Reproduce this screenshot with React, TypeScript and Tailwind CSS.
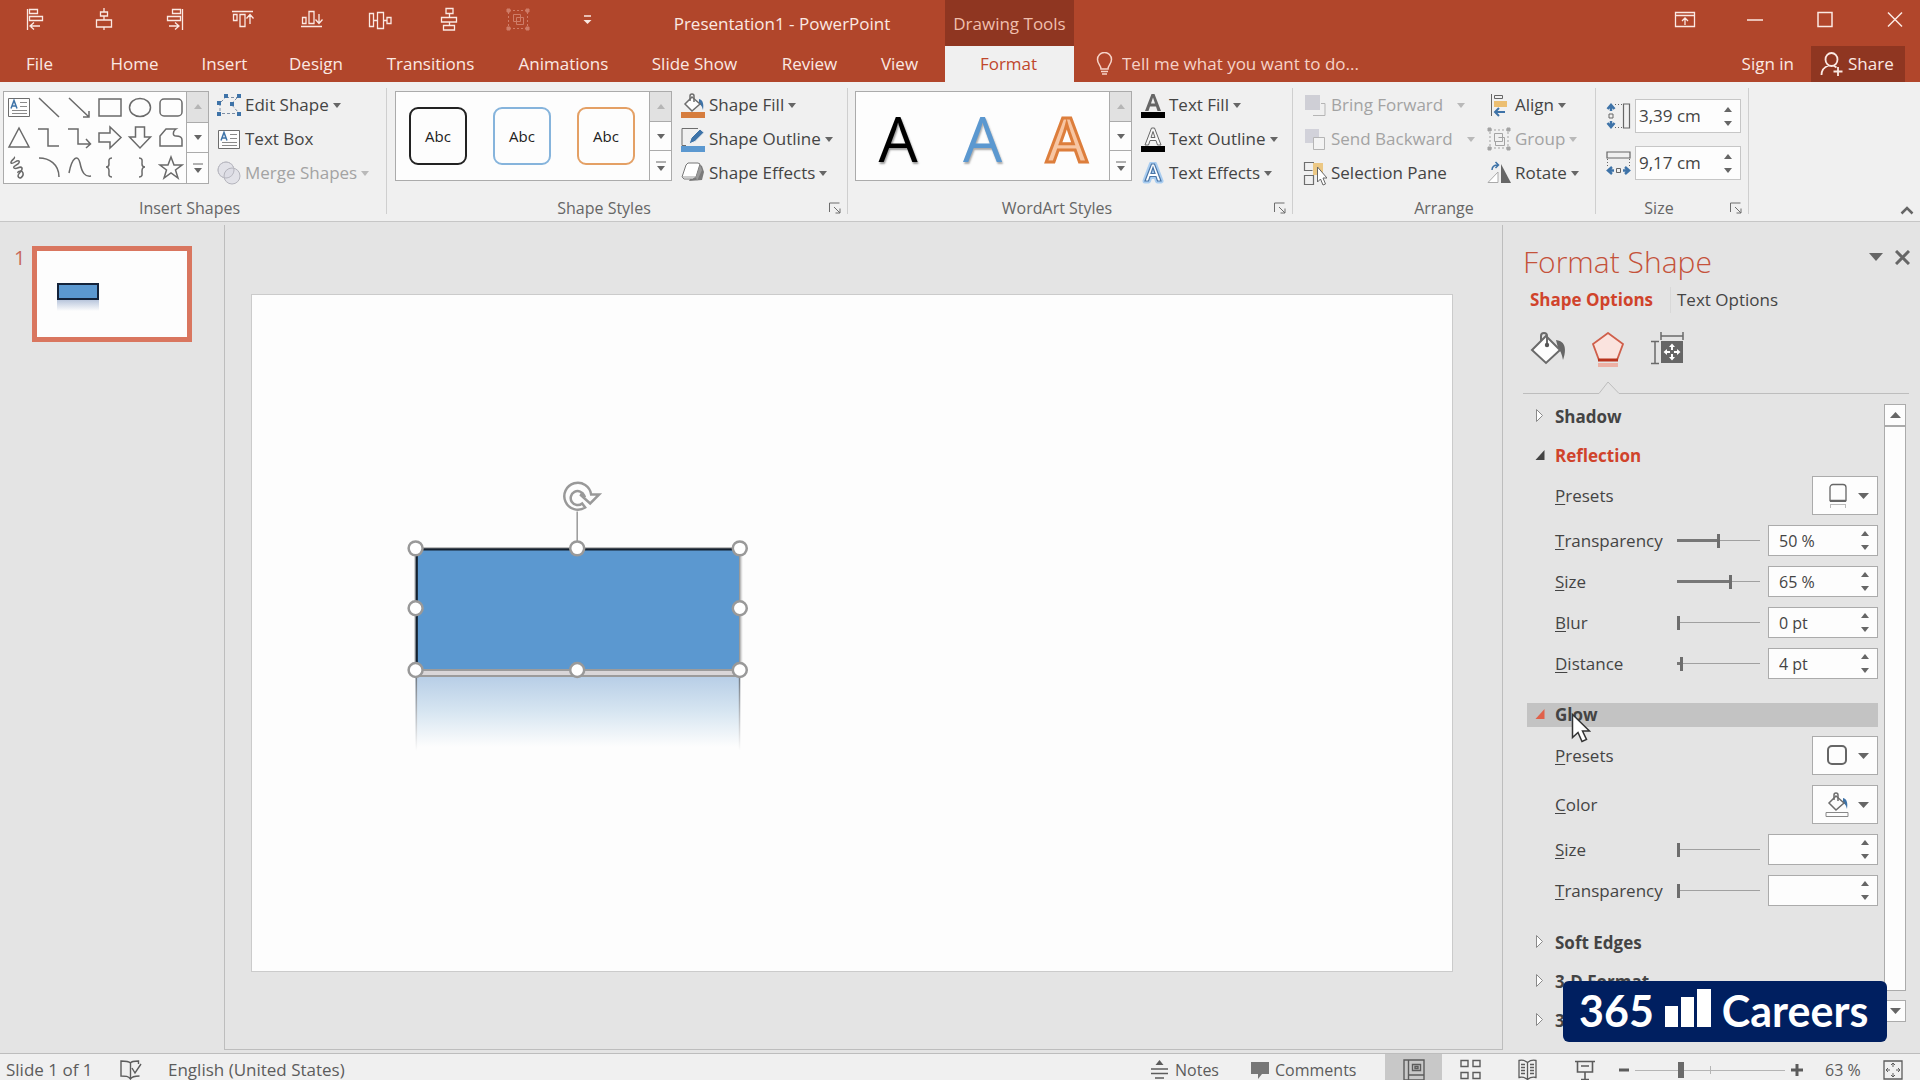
import React, { useState } from 'react';

type SvgProps = { w?: number; h?: number; className?: string; children: React.ReactNode };

const Svg: React.FC<SvgProps> = ({ w = 24, h = 24, className = '', children }) => (
  <svg width={w} height={h} viewBox={`0 0 ${w} ${h}`} fill="none" stroke="currentColor" className={`shrink-0 ${className}`} aria-hidden="true">
    {children}
  </svg>
);

const Caret: React.FC<{ className?: string; up?: boolean }> = ({ className = '', up }) => (
  <Svg w={8} h={5} className={className}>
    <path d={up ? 'M0 5L4 0L8 5Z' : 'M0 0H8L4 5Z'} fill="currentColor" stroke="none" />
  </Svg>
);

/* ---------- title bar ---------- */

const quickAccess = [
  { name: 'Align Left', icon: <path d="M4.5 2v21M6.5 2.5h8v4h-8zM6.5 9.5h13v4h-13zM8 19h9M11 15.5l-4 3.5l4 3.5" strokeWidth="1.3" /> },
  { name: 'Align Center', icon: <path d="M12 1v4M12 9v4M12 20v3M8.5 5h7v4h-7zM4.5 13h15v7h-15z" strokeWidth="1.3" /> },
  { name: 'Align Right', icon: <path d="M21.5 2v21M11.5 2.5h8v4h-8zM6.5 9.5h13v4h-13zM8 19h9M14 15.5l4 3.5l-4 3.5" strokeWidth="1.3" /> },
  { name: 'Align Top', icon: <path d="M2 4.5h21M3.5 7.5h3.5v6h-3.5zM10 7.5h5v12h-5zM20 17v-9M16.5 11.5l3.5-4l3.5 4" strokeWidth="1.3" /> },
  { name: 'Align Bottom', icon: <path d="M2 19.5h21M3.5 10.5h3.5v6h-3.5zM10 4.5h5v12h-5zM20 7v9M16.5 12.5l3.5 4l3.5-4" strokeWidth="1.3" /> },
  { name: 'Distribute Horizontally', icon: <path d="M1.5 6.5h4v13h-4zM9.5 5.5h6v16h-6zM19 10.5h4v6h-4zM5.5 13.5h4M15.5 13.5h3.5" strokeWidth="1.3" /> },
  { name: 'Distribute Vertically', icon: <path d="M9 1.5h7v5h-7zM4.5 10.5h15v4.5h-15zM6.5 18.5h11v4.5h-11zM12.5 6.5v4M12.5 15v3.5" strokeWidth="1.3" /> },
  {
    name: 'Group Objects',
    dim: true,
    icon: (
      <>
        <path d="M3 3.5h18M3 21.5h18M2.5 5v15M21.5 5v15" strokeDasharray="2 2" />
        <path d="M7.5 7.5h7v7h-7zM10.5 10.5h7v7h-7z" />
        <path d="M1 2h3v3h-3zM20 2h3v3h-3zM1 20h3v3h-3zM20 20h3v3h-3z" fill="currentColor" />
      </>
    ),
  },
  {
    name: 'Customize Quick Access Toolbar',
    icon: (
      <>
        <path d="M9 9h7" strokeWidth="1.5" />
        <path d="M8.5 13h8l-4 4z" fill="currentColor" stroke="none" />
      </>
    ),
  },
];

const windowButtons = [
  { name: 'Ribbon Display Options', icon: <path d="M2.5 5.5h19v14h-19zM2.5 8.5h19M12 18v-7M9 14l3-3l3 3" strokeWidth="1.3" /> },
  { name: 'Minimize', icon: <path d="M4 13h16" strokeWidth="1.5" /> },
  { name: 'Maximize', icon: <path d="M5 5.5h14v14h-14z" strokeWidth="1.5" /> },
  { name: 'Close', icon: <path d="M5 5.5l14 14M19 5.5l-14 14" strokeWidth="1.5" /> },
];

const tabs = [
  { name: 'File', width: 'w-[79px] mr-[9px]' },
  { name: 'Home', width: 'w-[93px]' },
  { name: 'Insert', width: 'w-[87px]' },
  { name: 'Design', width: 'w-[96px]' },
  { name: 'Transitions', width: 'w-[133px]' },
  { name: 'Animations', width: 'w-[133px]' },
  { name: 'Slide Show', width: 'w-[129px]' },
  { name: 'Review', width: 'w-[101px]' },
  { name: 'View', width: 'w-[79px] mr-[6px]' },
];

const TitleBar: React.FC = () => (
  <header className="bg-[#b1462b] text-[17px] text-[#fbe9e3]">
    <div className="flex h-[46px]">
      <div className="flex shrink-0">
        {quickAccess.map(q => (
          <button key={q.name} aria-label={q.name} className={`flex h-[38px] w-[69px] items-center justify-center ${q.dim ? 'text-[#cf7d68]' : ''}`}>
            <Svg>{q.icon}</Svg>
          </button>
        ))}
      </div>
      <h1 className="w-[324px] shrink-0 pr-[2px] text-center leading-[48px]">Presentation1 - PowerPoint</h1>
      <div className="w-[129px] shrink-0 bg-[#8f3621] text-center leading-[48px] text-[#f0bfae]">Drawing Tools</div>
      <div className="ml-auto flex gap-5">
        {windowButtons.map(b => (
          <button key={b.name} aria-label={b.name} className="flex h-[38px] w-[50px] items-center justify-center">
            <Svg>{b.icon}</Svg>
          </button>
        ))}
      </div>
    </div>
    <nav className="flex h-9 items-stretch">
      {tabs.map(t => (
        <button key={t.name} className={`shrink-0 ${t.width}`}>{t.name}</button>
      ))}
      <button className="w-[129px] shrink-0 bg-[#f0f0f0] pr-[2px] text-[#c0472c]">Format</button>
      <label className="flex items-center gap-[9px] pl-[22px] text-[#f6d3c8]">
        <Svg w={17} h={24}>
          <path d="M5 17c0-4-3.500-5-3.500-9.500a7 7 0 0 1 14 0c0 4.500-3.500 5.500-3.500 9.500zM5 19.500h7M6 22h5" strokeWidth="1.500" />
        </Svg>
        <input type="text" placeholder="Tell me what you want to do..." className="w-[260px] bg-transparent outline-none placeholder:text-[#f6d3c8]" />
      </label>
      <button className="ml-auto mr-[17px] shrink-0">Sign in</button>
      <button className="mr-[15px] flex w-[94px] shrink-0 items-center gap-1 bg-[#8f3621] pl-[9px]">
        <Svg w={24} h={26}>
          <path d="M11.500 2a6 6.500 0 0 1 0 13a6 6.500 0 0 1 0-13M1.500 24c0-5 3-8 7-9.500M13.500 14.500l3 2M18 16v9M13.500 20.500h9" strokeWidth="1.800" />
        </Svg>
        Share
      </button>
    </nav>
  </header>
);

/* ---------- ribbon ---------- */

const TextBoxIcon = () => (
  <Svg w={24} h={22}>
    <path d="M1.500 2.500h21v18h-21z" fill="#fdfdfd" stroke="#6d6d6d" />
    <path d="M4 12.500l3-8l3 8M5 10h4" stroke="#3e73a8" strokeWidth="1.500" />
    <path d="M13 6.500h7M13 10.500h7M5 14.500h15M5 17.500h15" stroke="#8a8a8a" />
  </Svg>
);

const shapes = [
  { name: 'Line', d: 'M3 3L23 22' },
  { name: 'Arrow', d: 'M2 3L22 22M22 16v6h-6' },
  { name: 'Rectangle', d: 'M2 4h22v17h-22z' },
  { name: 'Oval', d: 'M13 3.500c6 0 10.500 4 10.500 9s-4.500 9-10.500 9s-10.500-4-10.500-9s4.500-9 10.500-9z' },
  { name: 'Rounded Rectangle', d: 'M6 4h14a4 4 0 0 1 4 4v9a4 4 0 0 1-4 4h-14a4 4 0 0 1-4-4v-9a4 4 0 0 1 4-4z' },
  { name: 'Triangle', d: 'M13 3L23 22H3z' },
  { name: 'Elbow Connector', d: 'M2 4h10v17h11' },
  { name: 'Elbow Arrow', d: 'M1 4h10v15h12M19 14l4.500 5l-4.500 4' },
  { name: 'Right Arrow', d: 'M2 8h11v-6l11 10.500l-11 10.500v-6h-11z' },
  { name: 'Down Arrow', d: 'M8.500 2h9v10h6l-10.500 11l-10.500-11h6z' },
  { name: 'Freeform', d: 'M8 4h10c-3 2-4 7 0 7c4 0 6 1 6 4v6h-22v-10z' },
  { name: 'Scribble', d: 'M8 2c2 1-4 4-3 6c2 2 6-4 8-2c2 3-7 5-5 7c3 2 6-3 8 0c1 3-4 5-4 8c1 4 6 1 5-3c-1-3-6-2-5 0' },
  { name: 'Arc', d: 'M3 3c10 0 20 6 20 19' },
  { name: 'Curve', d: 'M2 18c3-16 9-19 11-10c2 10 5 14 11 13' },
  { name: 'Left Brace', d: 'M15 3c-4 0-3 3-3 6c0 2-1 3-3 3c2 0 3 2 3 4c0 3-1 6 3 6' },
  { name: 'Right Brace', d: 'M12 3c4 0 3 3 3 6c0 2 1 3 3 3c-2 0-3 2-3 4c0 3 1 6-3 6' },
  { name: 'Star', d: 'M13 2l3 8h8l-6.500 5l2.500 8l-7-5l-7 5l2.500-8l-6.500-5h8z' },
];

const GalleryScroll: React.FC = () => (
  <div className="flex w-[22px] shrink-0 flex-col divide-y divide-[#ababab] border-l border-[#ababab] text-[#666]">
    <button aria-label="Previous row" className="flex flex-1 items-center justify-center bg-[#e1e1e1] text-[#b5b5b5]">
      <Caret up />
    </button>
    <button aria-label="Next row" className="flex flex-1 items-center justify-center">
      <Caret />
    </button>
    <button aria-label="More" className="flex flex-1 items-center justify-center">
      <Svg w={12} h={12}>
        <path d="M1 2h10" />
        <path d="M2 6h8l-4 5z" fill="currentColor" stroke="none" />
      </Svg>
    </button>
  </div>
);

type GroupProps = { title: string; width: string; launcher?: boolean; children: React.ReactNode };

const Group: React.FC<GroupProps> = ({ title, width, launcher, children }) => (
  <>
    <section className={`flex h-[130px] shrink-0 flex-col ${width}`}>
      <div className="flex flex-1">{children}</div>
      <div className="flex h-5 items-center">
        <h2 className="flex-1 text-center text-[16px] leading-5 text-[#666]">{title}</h2>
        {launcher && (
          <button aria-label={`${title} options`} className="w-[26px] pl-2 text-[#6d6d6d]">
            <Svg w={12} h={12}>
              <path d="M.5 10v-9h10M5 5l6 6M11 6.500v4.500h-4.500" />
            </Svg>
          </button>
        )}
      </div>
    </section>
    <div className="h-[126px] w-px shrink-0 bg-[#cfcfcf]" />
  </>
);

type CommandProps = { label: string; icon: React.ReactNode; menu?: boolean; disabled?: boolean; wide?: boolean };

const Command: React.FC<CommandProps> = ({ label, icon, menu, disabled, wide }) => (
  <button disabled={disabled} className={`flex h-[34px] items-center whitespace-nowrap ${disabled ? 'text-[#a3a3a3]' : 'text-[#444]'}`}>
    <span className="mr-1 flex w-6 shrink-0 justify-center">{icon}</span>
    {label}
    {menu && <Caret className={`${wide ? 'ml-[14px]' : 'ml-1'} ${disabled ? 'text-[#b9b9b9]' : 'text-[#666]'}`} />}
  </button>
);

const EditShapeIcon = (
  <Svg>
    <path d="M9 4.500h11M4 9L9 4M20 5l-6 6l7 8M3 10v9M5 20.500h15" stroke="#7d8fa5" strokeDasharray="3 2" />
    <path d="M7 1h4v4h-4zM20 1h4v4h-4zM0 8h4v4h-4zM13 9h4v4h-4zM0 19h4v4h-4zM20 19h4v4h-4z" fill="#3e73a8" stroke="none" />
  </Svg>
);

const MergeIcon = (
  <Svg>
    <circle cx="9" cy="9" r="8" fill="#e2e2e8" stroke="#bcbcc4" />
    <circle cx="15" cy="15" r="8" fill="#dcdce4" fillOpacity=".7" stroke="#b4b4bc" />
    <circle cx="9" cy="9" r="8" stroke="#bcbcc4" />
  </Svg>
);

const FillIcon: React.FC<{ bar: string; outlined?: boolean }> = ({ bar, outlined }) => (
  <Svg w={24} h={25}>
    <path d="M18 6c4 1 5 5 4 11c-1-4-2-5-4-6z" fill="#3e73a8" stroke="none" />
    <path d="M11 4l8 7l-8 7l-7-7z" fill="#fdfdfd" stroke="#6d6d6d" strokeWidth="1.500" />
    <path d="M9 8v-5a2 2 0 0 1 4 0v6" stroke="#6d6d6d" strokeWidth="1.500" />
    <path d={outlined ? 'M1 20.500h22v4h-22z' : 'M0 19h24v6h-24z'} fill={bar} stroke={outlined ? '#888' : 'none'} />
  </Svg>
);

const OutlineIcon = (
  <Svg w={24} h={25}>
    <path d="M17 1.500h-16v17h4" stroke="#6d6d6d" />
    <path d="M8 17l2-6l9-9l4 3.500l-9 9z" fill="#3e73a8" stroke="#f0f0f0" />
    <path d="M0 19h24v6h-24z" fill="#5b98d0" stroke="none" />
  </Svg>
);

const EffectsIcon = (
  <Svg>
    <path d="M8 20l13-1l2-8l-2-6l-3-2z" fill="#7a7a7a" stroke="none" />
    <path d="M7 2h10l2 1l-4 13l-3 2h-9l-2-2l4-12z" fill="#fff" stroke="#777" />
    <path d="M15 16l4-12l2 5l-5 11z" fill="#999" stroke="none" />
    <path d="M1 16h14" stroke="#999" />
  </Svg>
);

const letterA = 'M4 18L10.500 1h3L20 18h-3.500l-1.500-4.500h-6l-1.500 4.500zM10 10.500h4L12 4.500z';

const TextFillIcon = (
  <Svg w={24} h={25}>
    <path d={letterA} fill="#666" stroke="none" fillRule="evenodd" />
    <path d="M0 19h24v6h-24z" fill="#000" stroke="none" />
  </Svg>
);

const TextOutlineIcon = (
  <Svg w={24} h={25}>
    <path d={letterA} fill="#f7f7f7" stroke="#666" fillRule="evenodd" />
    <path d="M0 19h24v6h-24z" fill="#000" stroke="none" />
  </Svg>
);

const TextEffectsIcon = (
  <Svg w={24} h={22}>
    <path d={letterA} stroke="#a9cdf0" strokeWidth="5" strokeLinejoin="round" fillRule="evenodd" transform="translate(0 1)" />
    <path d={letterA} fill="#fff" stroke="#4a76a8" strokeWidth="1.200" fillRule="evenodd" transform="translate(0 1)" />
  </Svg>
);

const BringIcon = (
  <Svg>
    <path d="M10 22.500h12v-12h-4" stroke="#b5b5b5" />
    <path d="M2 2h15v15h-15z" fill="#cfcfd6" stroke="none" />
  </Svg>
);

const SendIcon = (
  <Svg>
    <path d="M2 2h14v14h-14z" fill="#d2d2da" stroke="none" />
    <path d="M10.500 10.500h11v12h-11z" fill="#f3f3f3" stroke="#b5b5b5" />
  </Svg>
);

const SelectionIcon = (
  <Svg w={24} h={26}>
    <path d="M10 3h10v12h-10z" fill="#ecc884" stroke="none" />
    <path d="M11 2.500h-9.500v8h8M1.500 15.500h9v9h-9z" stroke="#6d6d6d" strokeWidth="1.200" />
    <path d="M14.500 7v15l3-3l2.500 6l2.500-1l-2.500-6h4z" fill="#fff" stroke="#666" />
  </Svg>
);

const AlignIcon = (
  <Svg>
    <path d="M4.500 1v22" stroke="#666" />
    <path d="M7.500 2.500h8v3h-8z" stroke="#666" />
    <path d="M7 8h13v6h-13z" fill="#ecbf72" stroke="none" />
    <path d="M8 19h10M12 15l-4 4l4 4" stroke="#3e73a8" strokeWidth="2" />
  </Svg>
);

const GroupIcon = (
  <Svg>
    <path d="M3 3h18v18h-18z" strokeDasharray="2 2" />
    <path d="M7.500 6.500h8v8h-8zM11.500 10.500h6v8h-9v-4" />
    <path d="M1 1h3v3h-3zM20 1h3v3h-3zM1 20h3v3h-3zM20 20h3v3h-3z" fill="currentColor" />
  </Svg>
);

const RotateIcon = (
  <Svg>
    <path d="M14 3v19h10z" fill="#666" stroke="none" />
    <path d="M11 11v10.500h-10z" fill="#fff" stroke="#aaa" />
    <path d="M5 9c0-4 2-5 6-5M8.500 1l3 3l-3 3" stroke="#3e73a8" strokeWidth="1.500" />
  </Svg>
);

const HeightIcon = (
  <Svg w={25} h={26}>
    <path d="M17.500 1h6v24h-6z" stroke="#666" strokeWidth="1.200" />
    <path d="M9 1.500h8M9 24.500h8" stroke="#666" strokeDasharray="1 2" />
    <path d="M3 11h4v4h-4z" stroke="#666" />
    <path d="M5 8v-6M1.500 6l3.500-4l3.500 4M5 18v6M1.500 20l3.500 4l3.500-4" stroke="#3e73a8" strokeWidth="2.500" />
  </Svg>
);

const WidthIcon = (
  <Svg w={25} h={26}>
    <path d="M1 2h23v6h-23z" stroke="#666" strokeWidth="1.200" />
    <path d="M1.500 9v7M23.500 9v7" stroke="#666" strokeDasharray="1 2" />
    <path d="M10.500 18.500h4v4h-4z" stroke="#666" />
    <path d="M8 20.500h-6M6 17l-4 3.500l4 3.500M17 20.500h6M19 17l4 3.500l-4 3.500" stroke="#3e73a8" strokeWidth="2.500" />
  </Svg>
);

type SpinBoxProps = { label: string; id: string; value: string; className: string };

const SpinBox: React.FC<SpinBoxProps> = ({ label, id, value, className }) => {
  const [text, setText] = useState(value);
  return (
    <div className={`flex shrink-0 border bg-[#fdfdfd] text-[#444] ${className}`}>
      <input id={id} aria-label={label} value={text} onChange={e => setText(e.target.value)} className="min-w-0 flex-1 bg-transparent outline-none" />
      <div className="flex w-6 flex-col items-center justify-center gap-[9px] text-[#666]">
        <button aria-label={`Increase ${label}`}><Caret up className="block" /></button>
        <button aria-label={`Decrease ${label}`}><Caret className="block" /></button>
      </div>
    </div>
  );
};

const Ribbon: React.FC = () => (
  <div className="flex h-[140px] border-b border-[#c6c6c6] bg-[#f0f0f0] pt-[6px] text-[17px]">
    <Group title="Insert Shapes" width="w-[386px] pr-[7px]">
      <div className="ml-[3px] mt-[3px] flex h-[93px] w-[206px] shrink-0 border border-[#ababab] bg-[#fdfdfd] text-[#6a6a6a]">
        <div className="grid flex-1 grid-cols-6 grid-rows-3">
          <button aria-label="Text Box shape" className="flex items-center justify-center"><TextBoxIcon /></button>
          {shapes.map(s => (
            <button key={s.name} aria-label={s.name} className="flex items-center justify-center">
              <Svg w={26} h={25}><path d={s.d} strokeWidth="1.500" /></Svg>
            </button>
          ))}
        </div>
        <GalleryScroll />
      </div>
      <div className="ml-2">
        <Command label="Edit Shape" icon={EditShapeIcon} menu />
        <Command label="Text Box" icon={<TextBoxIcon />} />
        <Command label="Merge Shapes" icon={MergeIcon} menu disabled />
      </div>
    </Group>

    <Group title="Shape Styles" width="w-[460px]" launcher>
      <div className="ml-2 mt-[3px] flex h-[90px] w-[277px] shrink-0 border border-[#ababab] bg-[#fdfdfd]">
        <div className="flex flex-1 items-center gap-[26px] pl-[13px] text-[15px] text-[#222]">
          <button className="h-[58px] w-[58px] rounded-[9px] border-2 border-[#222]">Abc</button>
          <button className="h-[58px] w-[58px] rounded-[9px] border-2 border-[#86b4dc]">Abc</button>
          <button className="h-[58px] w-[58px] rounded-[9px] border-2 border-[#e4a065]">Abc</button>
        </div>
        <GalleryScroll />
      </div>
      <div className="ml-[9px]">
        <Command label="Shape Fill" icon={<FillIcon bar="#d67d3e" />} menu />
        <Command label="Shape Outline" icon={OutlineIcon} menu />
        <Command label="Shape Effects" icon={EffectsIcon} menu />
      </div>
    </Group>

    <Group title="WordArt Styles" width="w-[444px]" launcher>
      <div className="ml-[7px] mt-[3px] flex h-[90px] w-[277px] shrink-0 border border-[#ababab] bg-[#fdfdfd]">
        <div className="grid flex-1 grid-cols-3 items-center pt-1 text-[62px] font-medium leading-[84px]">
          <button className="text-black [text-shadow:1px_2px_2px_#999]">A</button>
          <button className="text-[#5b98d0] [text-shadow:1px_2px_2px_#aaa]">A</button>
          <button className="font-semibold text-[#f7c6a3] [-webkit-text-stroke:3px_#dd7e3c]">A</button>
        </div>
        <GalleryScroll />
      </div>
      <div className="ml-[9px]">
        <Command label="Text Fill" icon={TextFillIcon} menu />
        <Command label="Text Outline" icon={TextOutlineIcon} menu />
        <Command label="Text Effects" icon={TextEffectsIcon} menu />
      </div>
    </Group>

    <Group title="Arrange" width="w-[302px]">
      <div className="ml-[10px] w-[184px]">
        <Command label="Bring Forward" icon={BringIcon} menu disabled wide />
        <Command label="Send Backward" icon={SendIcon} menu disabled wide />
        <Command label="Selection Pane" icon={SelectionIcon} />
      </div>
      <div>
        <Command label="Align" icon={AlignIcon} menu />
        <Command label="Group" icon={GroupIcon} menu disabled />
        <Command label="Rotate" icon={RotateIcon} menu />
      </div>
    </Group>

    <Group title="Size" width="w-[152px]" launcher>
      <div className="flex flex-col gap-[13px] pl-[10px] pt-[11px]">
        <div className="flex items-center gap-1">
          {HeightIcon}
          <SpinBox id="shape-height" label="Shape Height" value="3,39 cm" className="h-[34px] w-[106px] border-[#c6c6c6] pl-[3px]" />
        </div>
        <div className="flex items-center gap-1">
          {WidthIcon}
          <SpinBox id="shape-width" label="Shape Width" value="9,17 cm" className="h-[34px] w-[106px] border-[#c6c6c6] pl-[3px]" />
        </div>
      </div>
    </Group>

    <button aria-label="Collapse the Ribbon" className="ml-auto mr-[6px] self-end pb-[6px] text-[#666]">
      <Svg w={14} h={10}><path d="M1.500 8.500l5.500-5.500l5.500 5.500" strokeWidth="2.500" /></Svg>
    </button>
  </div>
);

/* ---------- slides ---------- */

const SlideThumbs: React.FC = () => (
  <aside className="flex w-[225px] shrink-0 border-r border-[#bdbdbd] pl-[14px] pt-[21px]">
    <span className="w-[18px] text-[20px] leading-6 text-[#c8695a]">1</span>
    <button aria-label="Slide 1" className="h-24 w-40 border-[5px] border-[#d9765f] bg-[#fdfdfd]">
      <svg viewBox="0 0 150 86" className="block h-full w-full">
        <defs>
          <linearGradient id="thumb-fade" x1="0" y1="0" x2="0" y2="1">
            <stop offset="0" stopColor="#b9c6dc" />
            <stop offset="1" stopColor="#fdfdfd" />
          </linearGradient>
        </defs>
        <rect x="20" y="49" width="42" height="11" fill="url(#thumb-fade)" />
        <rect x="21" y="33" width="40" height="15" fill="#5b98d0" stroke="#14233a" strokeWidth="2" />
      </svg>
    </button>
  </aside>
);

const handles = [
  [164, 254], [326, 254], [489, 254],
  [164, 314], [489, 314],
  [164, 376], [326, 376], [489, 376],
];

const SlideCanvas: React.FC = () => (
  <main className="min-w-0 flex-1 border-b border-r border-[#bdbdbd] pl-[26px] pr-[49px] pt-[69px]">
    <svg viewBox="0 0 1203 678" className="block w-full border border-[#cbcbcb] bg-[#fdfdfd]" role="img" aria-label="Slide with a selected rectangle">
      <defs>
        <linearGradient id="fade" x1="0" y1="0" x2="0" y2="1">
          <stop offset="0" stopColor="#b6cde6" />
          <stop offset="0.5" stopColor="#d6e5f1" />
          <stop offset="1" stopColor="#fdfdfd" />
        </linearGradient>
        <linearGradient id="edge" x1="0" y1="0" x2="0" y2="1">
          <stop offset="0" stopColor="#6f7780" />
          <stop offset="1" stopColor="#fdfdfd" />
        </linearGradient>
      </defs>
      <rect x="164" y="381" width="325" height="72" fill="url(#fade)" />
      <rect x="164" y="381" width="1.500" height="76" fill="url(#edge)" />
      <rect x="488" y="381" width="1.500" height="76" fill="url(#edge)" />
      <rect x="164" y="254" width="325" height="122" fill="#5b98d0" />
      <path d="M165 376V255H489" fill="none" stroke="#14202e" strokeWidth="2.500" />
      <path d="M163.500 376V253.500H489" fill="none" stroke="#999" strokeWidth="1" />
      <rect x="164" y="376" width="325" height="5" fill="#d9d6d8" />
      <path d="M490.500 254V376" stroke="#ddd" strokeWidth="2" />
      <path d="M489 254V376" stroke="#999" strokeWidth="1.500" />
      <path d="M164 376H489M164 382H489" stroke="#9b9b9b" strokeWidth="2" />
      <path d="M326 217V247" stroke="#999" strokeWidth="1.500" />
      <path d="M334 213A13.500 13.500 0 1 1 340 200L348 200L339 209L329 200L333 201A7 7 0 1 0 331 209Z" fill="#fdfdfd" stroke="#999" strokeWidth="2.500" />
      {handles.map(([x, y]) => (
        <circle key={`${x}-${y}`} cx={x} cy={y} r="7" fill="#fff" stroke="#999" strokeWidth="2.500" />
      ))}
    </svg>
  </main>
);

/* ---------- format pane ---------- */

const Key: React.FC<{ text: string }> = ({ text }) => (
  <><span className="underline underline-offset-2">{text[0]}</span>{text.slice(1)}</>
);

type SliderRowProps = { id: string; label: string; value: number; text: string };

const SliderRow: React.FC<SliderRowProps> = ({ id, label, value, text }) => {
  const [pos, setPos] = useState(value);
  return (
    <div className="flex h-[31px] items-center">
      <label htmlFor={id} className="w-[150px] pl-7"><Key text={label} /></label>
      <input
        id={id}
        type="range"
        min={0}
        max={100}
        value={pos}
        onChange={e => setPos(Number(e.target.value))}
        className="h-4 w-[83px] appearance-none bg-no-repeat [&::-webkit-slider-thumb]:h-[14px] [&::-webkit-slider-thumb]:w-[3px] [&::-webkit-slider-thumb]:appearance-none [&::-webkit-slider-thumb]:bg-[#6d6d6d]"
        style={{
          backgroundImage: 'linear-gradient(#777,#777),linear-gradient(#a0a0a0,#a0a0a0)',
          backgroundSize: `${pos}% 3px, 100% 1px`,
          backgroundPosition: '0 50%, 0 50%',
        }}
      />
      <SpinBox id={`${id}-value`} label={`${label} value`} value={text} className="ml-2 h-[31px] w-[110px] border-[#ababab] pl-[10px] text-[16px]" />
    </div>
  );
};

const PickerRow: React.FC<{ label: string; id: string; icon: React.ReactNode }> = ({ label, id, icon }) => (
  <div className="flex h-[39px] items-center justify-between pl-7">
    <label htmlFor={id}><Key text={label} /></label>
    <button id={id} className="flex h-[39px] w-[66px] items-center justify-between border border-[#ababab] bg-[#fdfdfd] pl-3 pr-2 text-[#666]">
      {icon}
      <Svg w={11} h={6}><path d="M0 0h11l-5.500 6z" fill="currentColor" stroke="none" /></Svg>
    </button>
  </div>
);

type SectionHeadProps = { title: string; open?: boolean; active?: boolean; hover?: boolean; children?: React.ReactNode };

const SectionHead: React.FC<SectionHeadProps> = ({ title, open, active, hover, children }) => (
  <button aria-expanded={!!open} className={`relative flex h-6 w-full items-center pl-2 font-bold ${hover ? 'bg-[#c3c3c3]' : ''} ${active ? 'text-[#d0432b]' : 'text-[#444]'}`}>
    <Svg w={10} h={16} className="mr-[10px]">
      {open
        ? <path d="M9.500 2v10h-9z" fill={hover ? '#e0614a' : '#444'} stroke="none" />
        : <path d="M1.500 .5v12l6-6z" fill="#fdfdfd" stroke="#8a8a8a" />}
    </Svg>
    {title}
    {children}
  </button>
);

const PointerArrow = (
  <svg width="20" height="30" viewBox="0 0 20 30" className="absolute left-[44px] top-[10px] z-10">
    <path d="M1.500 1.500v23l5.500-5l4 9l4.500-2l-4-8.500h7z" fill="#fff" stroke="#333" strokeWidth="1.500" />
  </svg>
);

const FormatPane: React.FC = () => (
  <aside className="flex w-[417px] shrink-0 flex-col overflow-hidden pl-5 pt-4 text-[17px] text-[#444]">
    <div className="flex h-10 items-center pr-[10px]">
      <h2 className="text-[30px] font-light text-[#c4523a]">Format Shape</h2>
      <button aria-label="Task Pane Options" className="ml-auto mb-2 text-[#666]">
        <Svg w={14} h={8}><path d="M0 0h14l-7 8z" fill="currentColor" stroke="none" /></Svg>
      </button>
      <button aria-label="Close pane" className="ml-3 mb-2 text-[#666]">
        <Svg w={15} h={15}><path d="M1 1l13 13M14 1l-13 13" strokeWidth="3" /></Svg>
      </button>
    </div>
    <div className="mt-[7px] flex h-6 items-center pl-[7px]">
      <button className="w-[141px] border-r border-[#d8d8d8] text-left font-bold text-[#d0432b]">Shape Options</button>
      <button className="pl-[6px]">Text Options</button>
    </div>
    <div className="mt-5 flex h-9 gap-6 pl-[7px]">
      <button aria-label="Fill & Line">
        <Svg w={36} h={36}>
          <path d="M26 8c9 1 11 8 7 20c-1-6-3-10-5-12z" fill="#666" stroke="none" />
          <path d="M16 4l14 14l-14 13l-14-13z" fill="#fdfdfd" stroke="#6a6a6a" strokeWidth="2" />
          <path d="M11 9v-5c0-4 6-4 6 0v8" stroke="#6a6a6a" strokeWidth="2" />
          <circle cx="17" cy="13" r="2.200" fill="#555" stroke="none" />
        </Svg>
      </button>
      <button aria-label="Effects">
        <Svg w={36} h={36}>
          <path d="M18 1l15 11l-6 16h-18l-6-16z" fill="#fae3de" stroke="#cf5f4b" strokeWidth="1.800" />
          <path d="M8 28h20" stroke="#b8321c" strokeWidth="3" />
          <path d="M8 31h20v4h-20z" fill="#edb0a4" stroke="none" />
        </Svg>
      </button>
      <button aria-label="Size & Properties">
        <Svg w={36} h={36}>
          <path d="M11 0v8M33 0v8M11 4h22M1 9.500h8M1 31.500h8M5 9.500v22" stroke="#6a6a6a" strokeWidth="1.500" />
          <path d="M11 9h22v22h-22z" fill="#666" stroke="none" />
          <path d="M22 13v5M22 22v5M15 20h5M24 20h5" stroke="#fff" strokeWidth="2" />
          <path d="M19 15l3-3.500l3 3.500zM19 25l3 3.500l3-3.500zM17 17l-3.500 3l3.500 3zM27 17l3.500 3l-3.500 3z" fill="#fff" stroke="none" />
        </Svg>
      </button>
    </div>
    <Svg w={386} h={14} className="mt-[13px] text-[#bdbdbd]">
      <path d="M0 12.500h76l9-11.500l11 11.500h290" fill="none" />
    </Svg>
    <div className="mt-[9px] flex flex-1">
      <div className="ml-1 w-[351px] pt-px">
        <SectionHead title="Shadow" />
        <div className="mt-[15px]"><SectionHead title="Reflection" open active /></div>
        <div className="mt-2 flex flex-col gap-[10px]">
          <PickerRow
            id="reflection-presets"
            label="Presets"
            icon={
              <Svg w={26} h={26}>
                <path d="M8 1.500h10a3 3 0 0 1 3 3v13h-16v-13a3 3 0 0 1 3-3z" strokeWidth="1.300" />
                <path d="M5 18h16" strokeWidth="2" />
                <path d="M5 21.500h16M5.500 22v3M20.500 22v3" stroke="#bbb" />
              </Svg>
            }
          />
          <SliderRow id="reflection-transparency" label="Transparency" value={50} text="50 %" />
          <SliderRow id="reflection-size" label="Size" value={65} text="65 %" />
          <SliderRow id="reflection-blur" label="Blur" value={0} text="0 pt" />
          <SliderRow id="reflection-distance" label="Distance" value={4} text="4 pt" />
        </div>
        <div className="mt-6"><SectionHead title="Glow" open hover>{PointerArrow}</SectionHead></div>
        <div className="mb-[25px] mt-[9px] flex flex-col gap-[10px]">
          <PickerRow id="glow-presets" label="Presets" icon={<Svg w={26} h={26}><path d="M7 3h10a4 4 0 0 1 4 4v10a4 4 0 0 1-4 4h-10a4 4 0 0 1-4-4v-10a4 4 0 0 1 4-4z" strokeWidth="2" /></Svg>} />
          <PickerRow id="glow-color" label="Color" icon={<FillIcon bar="#fdfdfd" outlined />} />
          <SliderRow id="glow-size" label="Size" value={0} text="" />
          <SliderRow id="glow-transparency" label="Transparency" value={0} text="" />
        </div>
        <div className="flex flex-col gap-[15px]">
          <SectionHead title="Soft Edges" />
          <SectionHead title="3-D Format" />
          <SectionHead title="3-D Rotation" />
        </div>
      </div>
      <div className="mb-7 ml-[6px] flex w-[22px] flex-col text-[#666]">
        <button aria-label="Scroll up" className="flex h-[22px] items-center justify-center border border-[#ababab] bg-[#fdfdfd]">
          <Svg w={11} h={6}><path d="M0 6h11l-5.500-6z" fill="currentColor" stroke="none" /></Svg>
        </button>
        <div className="mb-[9px] flex-1 border border-[#ababab] bg-[#fdfdfd]" />
        <button aria-label="Scroll down" className="flex h-[22px] items-center justify-center border border-[#ababab] bg-[#fdfdfd]">
          <Svg w={11} h={6}><path d="M0 0h11l-5.500 6z" fill="currentColor" stroke="none" /></Svg>
        </button>
      </div>
    </div>
  </aside>
);

const CareersBadge: React.FC = () => (
  <div className="absolute bottom-[38px] right-[33px] z-20 flex h-[61px] w-[324px] items-center rounded-md bg-[#001f60] pl-4 font-['Lato',sans-serif] text-[43px] font-bold text-white">
    365
    <svg width="46" height="40" viewBox="0 0 46 40" className="mx-[11px] mb-2 shrink-0" fill="#fff" aria-hidden="true">
      <path d="M0 18h13v21h-13zM16 9h13v30h-13zM32 1h14v38h-14z" />
    </svg>
    Careers
  </div>
);

/* ---------- status bar ---------- */

const views = [
  { name: 'Normal', active: true, icon: <path d="M2 2h20v20h-20zM6.500 2v20M10.500 6.500h8v6h-8zM6.500 17h15M13 8.500h3v2h-3z" strokeWidth="1.400" /> },
  { name: 'Slide Sorter', icon: <path d="M2 2.500h7v6h-7zM14 2.500h7v6h-7zM2 14.500h7v6h-7zM14 14.500h7v6h-7z" strokeWidth="1.400" /> },
  { name: 'Reading View', icon: <path d="M11.500 4v19M3 2.500c4-1 6 0 8.500 2c2.500-2 4.500-3 8.500-2v17c-4-1-6 0-8.500 2c-2.500-2-4.500-3-8.500-2zM5 6.500h4M5 9.500h4M5 12.500h4M5 15.500h4M14 6.500h4M14 9.500h4M14 12.500h4M14 15.500h4" strokeWidth="1.300" /> },
  { name: 'Slide Show', icon: <path d="M2 3.500h20M4.500 4v10h15v-10M8 8h8M12 14v7M8 21.500h8" strokeWidth="1.600" /> },
];

const StatusBar: React.FC = () => {
  const [zoom, setZoom] = useState(30);
  return (
    <footer className="h-[27px] shrink-0 overflow-hidden border-t border-[#bdbdbd] bg-[#f0f0f0] text-[16px] text-[#5c5c5c]">
      <div className="flex h-8 items-center">
        <span className="w-[120px] pl-[6px] text-[17px]">Slide 1 of 1</span>
        <button aria-label="Spelling" className="w-12">
          <Svg w={22} h={22}>
            <path d="M10.500 20v-16c-2-2-5-2-9.500-2v15c5 0 7 0 9.500 3c1-2 4-3 9-3M10.500 4c1-2 4-2 8-2v3M12 9l3 5l6-9" strokeWidth="1.400" />
          </Svg>
        </button>
        <button className="text-[17px]">English (United States)</button>
        <button className="ml-auto flex w-[100px] shrink-0 items-center gap-[7px]">
          <Svg w={17} h={20}>
            <path d="M4.500 5h8l-4-5z" fill="currentColor" stroke="none" />
            <path d="M0 9h17M0 13.500h17M4 18h9" strokeWidth="1.500" />
          </Svg>
          Notes
        </button>
        <button className="flex w-[134px] shrink-0 items-center gap-[6px]">
          <Svg w={18} h={19}><path d="M0 1h18v12h-7l-4 5v-5h-7z" fill="#777" stroke="none" /></Svg>
          Comments
        </button>
        {views.map(v => (
          <button key={v.name} aria-label={v.name} className={`flex h-full w-[57px] shrink-0 items-center justify-center ${v.active ? 'bg-[#c8c8c8]' : ''}`}>
            <Svg w={24} h={24}>{v.icon}</Svg>
          </button>
        ))}
        <button aria-label="Zoom out" className="flex w-[22px] shrink-0 justify-center">
          <Svg w={12} h={12}><path d="M1 6h10" strokeWidth="3" /></Svg>
        </button>
        <input
          type="range"
          aria-label="Zoom"
          value={zoom}
          onChange={e => setZoom(Number(e.target.value))}
          className="h-4 w-[150px] shrink-0 appearance-none bg-[linear-gradient(#b5b5b5,#b5b5b5),linear-gradient(#b5b5b5,#b5b5b5)] bg-[length:100%_1px,1px_8px] bg-center bg-no-repeat [&::-webkit-slider-thumb]:h-4 [&::-webkit-slider-thumb]:w-[6px] [&::-webkit-slider-thumb]:appearance-none [&::-webkit-slider-thumb]:bg-[#6a6a6a]"
        />
        <button aria-label="Zoom in" className="flex w-6 shrink-0 justify-center">
          <Svg w={12} h={12}><path d="M0 6h12M6 0v12" strokeWidth="3" /></Svg>
        </button>
        <button className="w-[74px] shrink-0 pl-4 text-left">63 %</button>
        <button aria-label="Fit slide to current window" className="mr-[17px] shrink-0">
          <Svg w={20} h={20}>
            <path d="M1 1h18v18h-18z" strokeWidth="1.300" />
            <path d="M10 3v4M10 13v4M3 10h4M13 10h4M8 5l2-2l2 2M8 15l2 2l2-2M5 8l-2 2l2 2M15 8l2 2l-2 2" />
          </Svg>
        </button>
      </div>
    </footer>
  );
};

const App: React.FC = () => {
  return (
    <div className="relative flex min-h-screen flex-col overflow-hidden bg-[#e4e4e4] font-['Open_Sans','Noto_Sans',sans-serif]">
      <TitleBar />
      <Ribbon />
      <div className="flex flex-1 py-[3px]">
        <SlideThumbs />
        <SlideCanvas />
        <FormatPane />
      </div>
      <StatusBar />
      <CareersBadge />
    </div>
  );
};

export default App;
